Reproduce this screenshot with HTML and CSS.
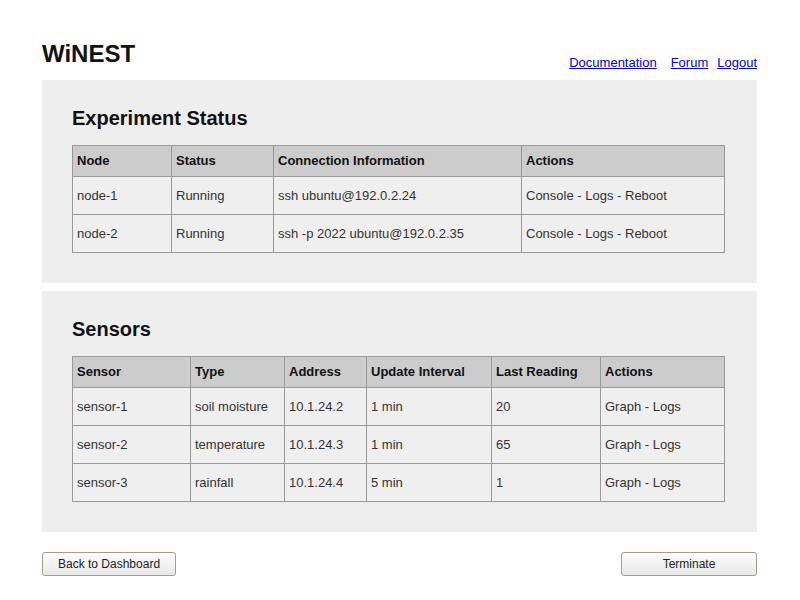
FILE: index.html
```html
<!DOCTYPE html>
<html>
<head>
<meta charset="utf-8">
<title>WiNEST</title>
<link rel="stylesheet" href="styles.css">
</head>
<body>
<div class="page">
  <header class="header">
    <h1 class="logo">WiNEST</h1>
    <nav class="nav">
      <a href="#" class="nav-doc">Documentation</a>
      <a href="#" class="nav-forum">Forum</a>
      <a href="#">Logout</a>
    </nav>
  </header>

  <section class="panel">
    <h2 class="panel-title">Experiment Status</h2>
    <table class="grid">
      <colgroup>
        <col style="width:99px"><col style="width:102px"><col style="width:248px"><col>
      </colgroup>
      <thead>
        <tr><th>Node</th><th>Status</th><th>Connection Information</th><th>Actions</th></tr>
      </thead>
      <tbody>
        <tr><td>node-1</td><td>Running</td><td>ssh ubuntu@192.0.2.24</td><td>Console - Logs - Reboot</td></tr>
        <tr><td>node-2</td><td>Running</td><td>ssh -p 2022 ubuntu@192.0.2.35</td><td>Console - Logs - Reboot</td></tr>
      </tbody>
    </table>
  </section>

  <section class="panel">
    <h2 class="panel-title">Sensors</h2>
    <table class="grid">
      <colgroup>
        <col style="width:118px"><col style="width:94px"><col style="width:82px"><col style="width:125px"><col style="width:109px"><col>
      </colgroup>
      <thead>
        <tr><th>Sensor</th><th>Type</th><th>Address</th><th>Update Interval</th><th>Last Reading</th><th>Actions</th></tr>
      </thead>
      <tbody>
        <tr><td>sensor-1</td><td>soil moisture</td><td>10.1.24.2</td><td>1 min</td><td>20</td><td>Graph - Logs</td></tr>
        <tr><td>sensor-2</td><td>temperature</td><td>10.1.24.3</td><td>1 min</td><td>65</td><td>Graph - Logs</td></tr>
        <tr><td>sensor-3</td><td>rainfall</td><td>10.1.24.4</td><td>5 min</td><td>1</td><td>Graph - Logs</td></tr>
      </tbody>
    </table>
  </section>

  <div class="actions">
    <button class="btn btn-back">Back to Dashboard</button>
    <button class="btn btn-term">Terminate</button>
  </div>
</div>
</body>
</html>
```

FILE: styles.css
```css
html, body {
  margin: 0;
  padding: 0;
  background: #fff;
}
body {
  font-family: "Liberation Sans", Arial, sans-serif;
  color: #222;
}
.page {
  width: 715px;
  margin-left: 42px;
  padding-top: 40px;
}
.header {
  display: flex;
  justify-content: space-between;
  align-items: flex-end;
  height: 28px;
  margin-bottom: 12px;
}
.logo {
  margin: 0;
  font-size: 24px;
  line-height: 28px;
  font-weight: bold;
  color: #111;
}
.nav {
  display: flex;
  font-size: 13px;
  line-height: 15px;
  margin-bottom: -2px;
}
.nav a {
  color: #0000ee;
  text-decoration: underline;
}
.nav-doc { margin-right: 14px; }
.nav-forum { margin-right: 9px; }

.panel {
  background: #eeeeee;
  padding: 27px 32px 30px 30px;
  margin-bottom: 8px;
}
.panel-title {
  margin: 0 0 15px 0;
  font-size: 20px;
  line-height: 23px;
  font-weight: bold;
  color: #111;
}
.grid {
  width: 100%;
  table-layout: fixed;
  border-collapse: collapse;
  font-size: 13px;
  line-height: 15px;
}
.grid th, .grid td {
  border: 1px solid #999;
  text-align: left;
  padding-left: 4px;
  padding-right: 4px;
  white-space: nowrap;
  overflow: hidden;
}
.grid th {
  background: #cccccc;
  color: #111;
  font-weight: bold;
  padding-top: 7px;
  padding-bottom: 8px;
}
.grid td {
  background: #efefef;
  color: #333;
  padding-top: 11px;
  padding-bottom: 11px;
}
.actions {
  display: flex;
  justify-content: space-between;
  margin-top: 20px;
}
.btn {
  font-family: "Liberation Sans", Arial, sans-serif;
  font-size: 12px;
  line-height: 14px;
  color: #222;
  height: 24px;
  border: 1px solid #a59b90;
  border-radius: 3px;
  background: linear-gradient(#fdfdfd, #e9e9e9);
  padding: 0 15px;
  margin: 0;
}
.btn-term {
  width: 136px;
}
```
